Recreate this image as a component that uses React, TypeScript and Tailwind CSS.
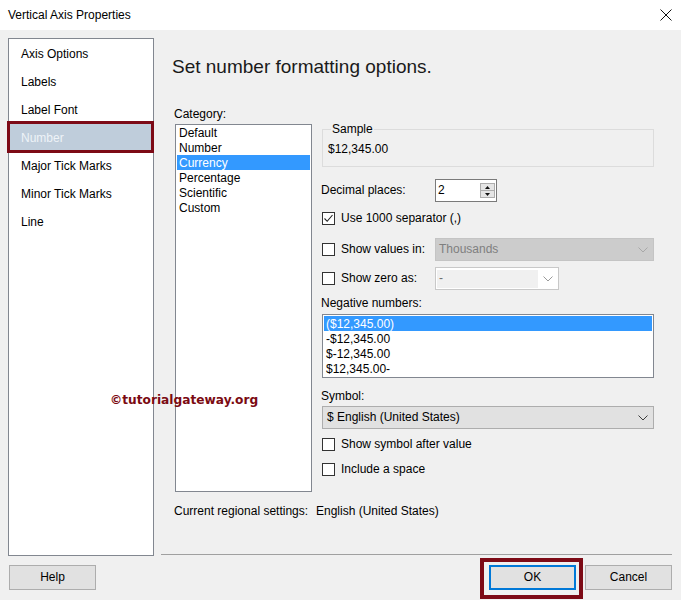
import React from 'react';

const categories = ['Default', 'Number', 'Currency', 'Percentage', 'Scientific', 'Custom'];
const negatives = ['($12,345.00)', '-$12,345.00', '$-12,345.00', '$12,345.00-'];
const pages = ['Axis Options', 'Labels', 'Label Font', 'Number', 'Major Tick Marks', 'Minor Tick Marks', 'Line'];

function Chevron({ color = '#3c3c3c' }: { color?: string }) {
  return (
    <svg width="10" height="6" viewBox="0 0 10 6" fill="none">
      <path d="M0.5 0.5 L5 5 L9.5 0.5" stroke={color} strokeWidth="1" />
    </svg>
  );
}

function Checkbox({ checked = false }: { checked?: boolean }) {
  return (
    <div className="w-[13px] h-[13px] border border-[#333333] bg-white flex items-center justify-center shrink-0">
      {checked && (
        <svg width="11" height="11" viewBox="0 0 11 11" fill="none">
          <path d="M1.5 5.5 L4.2 8.3 L9.5 2" stroke="#222" strokeWidth="1.1" />
        </svg>
      )}
    </div>
  );
}

function CheckRow({ label, checked, className = '' }: { label: string; checked?: boolean; className?: string }) {
  return (
    <div className={`flex items-center h-[20px] ml-px ${className}`}>
      <Checkbox checked={checked} />
      <span className="ml-[6px] pt-px">{label}</span>
    </div>
  );
}

export default function App() {
  return (
    <div className="relative w-[681px] h-[600px] bg-[#f0f0f0] overflow-hidden font-['Liberation_Sans',Arial,sans-serif] text-[12px] leading-[15px] text-black">
      {/* title bar */}
      <div className="h-[30px] bg-white flex items-center justify-between pl-[8px] pr-[9px]">
        <span>Vertical Axis Properties</span>
        <svg width="12" height="12" viewBox="0 0 12 12" fill="none">
          <path d="M0.5 0.5 L11.5 11.5 M11.5 0.5 L0.5 11.5" stroke="#111" strokeWidth="1" />
        </svg>
      </div>

      <div className="flex h-[518px] mt-[8px] pl-[8px]">
        {/* page list */}
        <div className="w-[146px] border border-[#828790] bg-white pt-px">
          {pages.map((p) =>
            p === 'Number' ? (
              <div key={p} className="relative h-[28px] flex items-center pl-[12px]">
                <div className="absolute -top-[3px] -bottom-[1px] -left-[2px] -right-[1px] border-[3px] border-[#7d0a16] bg-[#bfcddb]" />
                <span className="relative text-[#eef3f8]">{p}</span>
              </div>
            ) : (
              <div key={p} className="h-[28px] flex items-center pl-[12px]">
                {p}
              </div>
            )
          )}
        </div>

        {/* right side */}
        <div className="flex-1 flex flex-col pl-[7px] pr-[9px]">
          <h1 className="ml-[11px] mt-[18px] text-[19px] leading-[22px] text-[#1a1a1a]">Set number formatting options.</h1>

          <div className="ml-[13px] mt-[29px] flex gap-[9px]">
            {/* category */}
            <div className="w-[138px]">
              <div>Category:</div>
              <div className="mt-[2px] ml-px h-[368px] border border-[#828790] bg-white">
                {categories.map((c) => (
                  <div
                    key={c}
                    className={`h-[15px] mx-px pl-[2px] pt-[2px] leading-[13px] ${c === 'Currency' ? 'bg-[#3399ff] text-white' : ''}`}
                  >
                    {c}
                  </div>
                ))}
              </div>
            </div>

            {/* options */}
            <div className="w-[333px]">
              <div className="relative mt-[22px] ml-px h-[38px] border border-[#dcdcdc] pl-[5px] pt-[12px]">
                <span className="absolute -top-[8px] left-[8px] px-px bg-[#f0f0f0]">Sample</span>
                $12,345.00
              </div>

              <div className="mt-[12px] h-[23px] flex items-center">
                <span className="w-[114px]">Decimal places:</span>
                <div className="w-[62px] h-[23px] border border-[#7a7a7a] bg-white flex items-center">
                  <span className="flex-1 pl-[2px]">2</span>
                  <div className="w-[15px] mr-px flex flex-col">
                    <div className="h-[8px] border border-[#adadad] bg-[#e5e5e5] flex items-center justify-center">
                      <svg width="5" height="3" viewBox="0 0 5 3"><path d="M0 3 L2.5 0 L5 3 Z" fill="#111" /></svg>
                    </div>
                    <div className="h-[8px] -mt-px border border-[#adadad] bg-[#e5e5e5] flex items-center justify-center">
                      <svg width="5" height="3" viewBox="0 0 5 3"><path d="M0 0 L2.5 3 L5 0 Z" fill="#111" /></svg>
                    </div>
                  </div>
                </div>
              </div>

              <CheckRow label="Use 1000 separator (,)" checked className="mt-[6px]" />

              <div className="mt-[10px] h-[23px] flex items-center">
                <div className="w-[114px] flex items-center ml-px -mr-px">
                  <Checkbox />
                  <span className="ml-[6px]">Show values in:</span>
                </div>
                <div className="w-[219px] h-[23px] bg-[#cccccc] border border-[#c4c4c4] flex items-center justify-between pl-[3px] pr-[5px] text-[#7f7f7f]">
                  <span>Thousands</span>
                  <Chevron color="#a8a8a8" />
                </div>
              </div>

              <div className="mt-[6px] h-[23px] flex items-center">
                <div className="w-[114px] flex items-center ml-px -mr-px">
                  <Checkbox />
                  <span className="ml-[6px]">Show zero as:</span>
                </div>
                <div className="w-[124px] h-[23px] bg-white border border-[#c8c8c8] flex items-center p-[1px]">
                  <div className="w-[101px] h-[18px] bg-[#f0f0f0] pl-[2px] flex items-center text-[#6d6d6d]">-</div>
                  <div className="flex-1 flex justify-center">
                    <Chevron color="#9a9a9a" />
                  </div>
                </div>
              </div>

              <div className="mt-[6px]">Negative numbers:</div>
              <div className="mt-[3px] ml-px h-[64px] border border-[#828790] bg-white pt-px">
                {negatives.map((n, i) => (
                  <div key={n} className={`h-[15px] mx-px pl-[2px] pt-px leading-[14px] ${i === 0 ? 'bg-[#3399ff] text-white' : ''}`}>
                    {n}
                  </div>
                ))}
              </div>

              <div className="mt-[11px]">Symbol:</div>
              <div className="mt-[2px] ml-px h-[23px] bg-[#e1e1e1] border border-[#adadad] flex items-center justify-between pl-[4px] pr-[5px]">
                <span>$ English (United States)</span>
                <Chevron />
              </div>

              <CheckRow label="Show symbol after value" className="mt-[5px]" />
              <CheckRow label="Include a space" className="mt-[5px]" />
            </div>
          </div>

          <div className="ml-[13px] mt-[12px] flex">
            <span className="w-[142px]">Current regional settings:</span>
            <span>English (United States)</span>
          </div>

          <div className="mt-auto mb-px h-px bg-[#a0a0a0]" />
        </div>
      </div>

      {/* buttons */}
      <div className="mt-[9px] px-[9px] flex items-center">
        <button className="w-[87px] h-[25px] bg-[#e1e1e1] border border-[#adadad]">Help</button>
        <div className="flex-1" />
        <div className="relative">
          <div className="absolute -left-[9px] -right-[7px] -top-[7px] -bottom-[9px] border-[4px] border-[#7d0a16]" />
          <button className="relative w-[87px] h-[25px] bg-[#e1e1e1] border-2 border-[#0078d7]">OK</button>
        </div>
        <button className="ml-[9px] w-[87px] h-[25px] bg-[#e1e1e1] border border-[#adadad]">Cancel</button>
      </div>

      {/* watermark */}
      <div className="absolute left-[110px] top-[393px] font-['DejaVu_Sans',Verdana,sans-serif] font-bold text-[12.2px] leading-[15px] text-[#7b0a12]">
        ©tutorialgateway.org
      </div>
    </div>
  );
}
